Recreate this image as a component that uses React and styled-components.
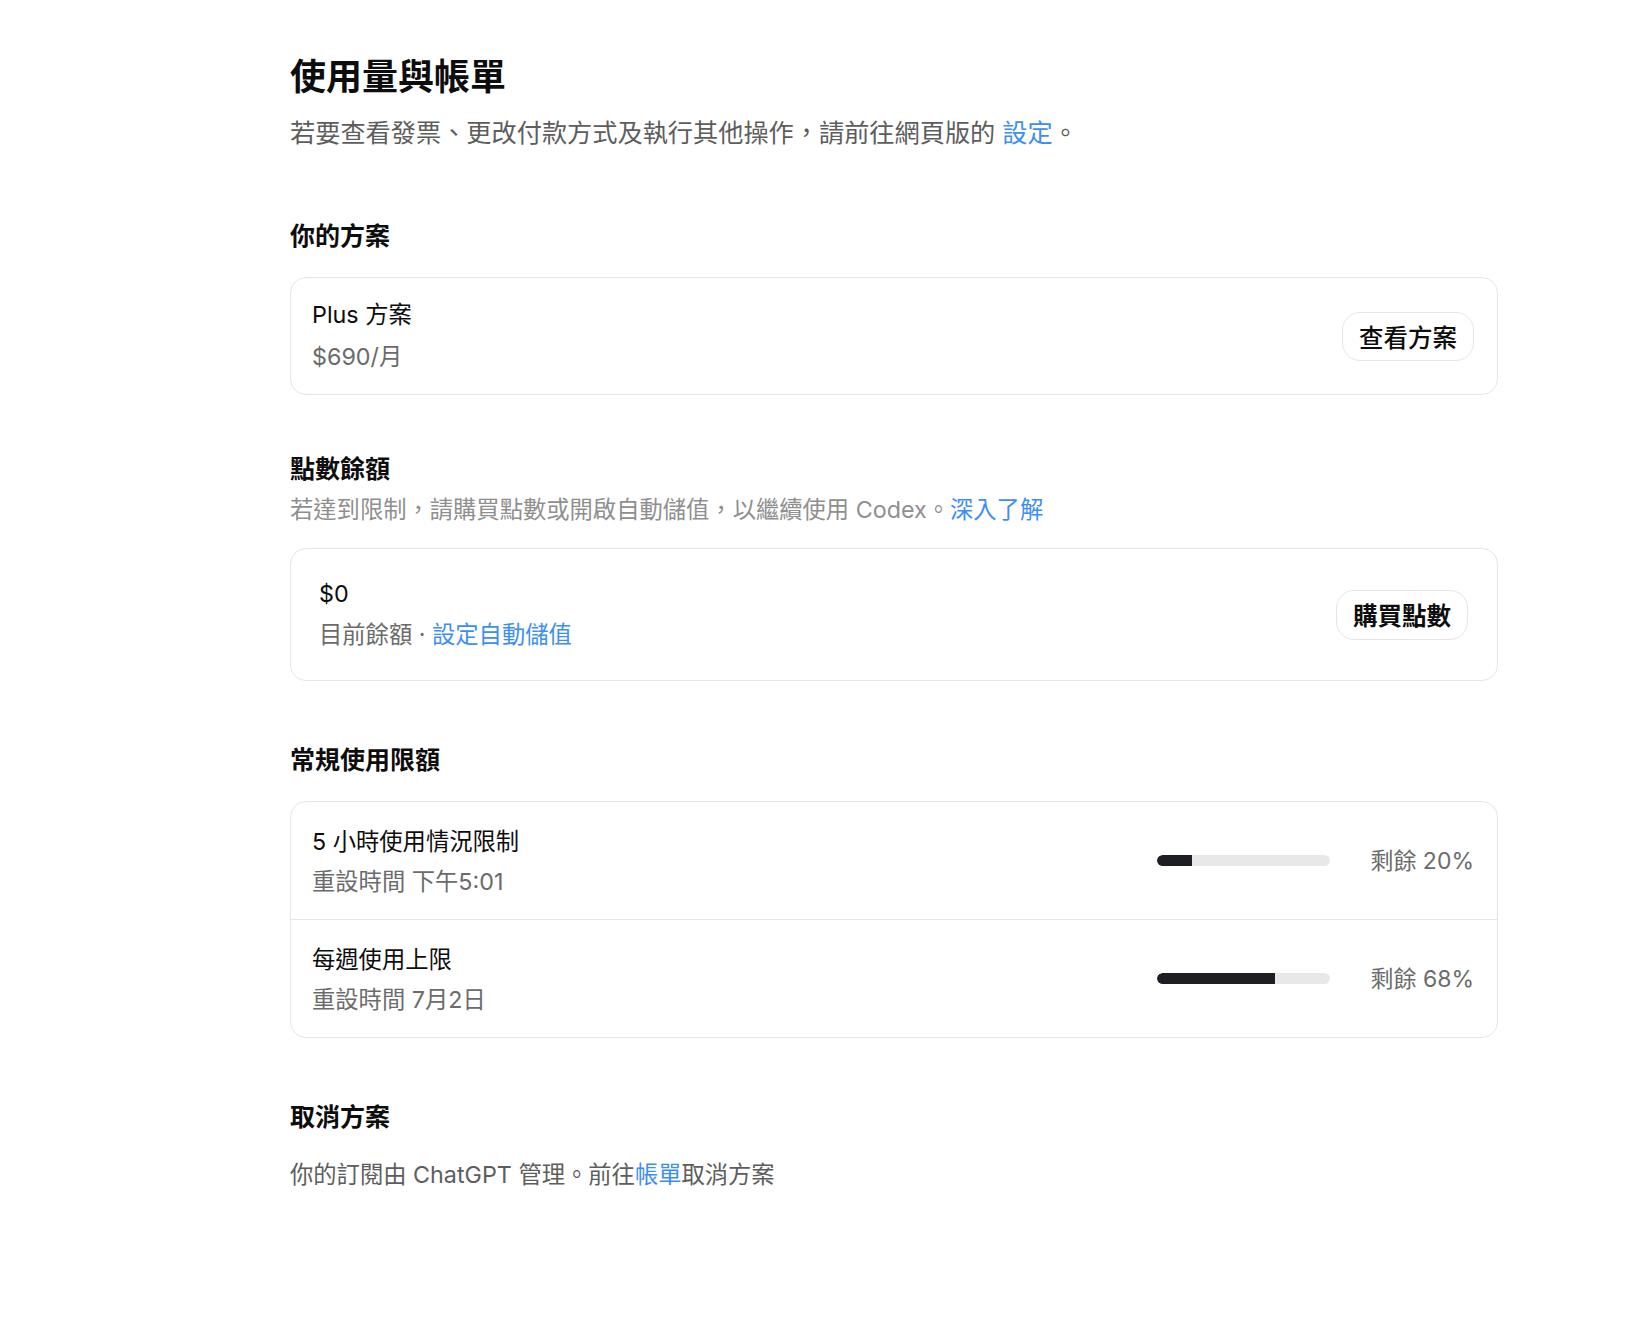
import React from 'react';
import styled, { createGlobalStyle } from 'styled-components';

const GlobalStyle = createGlobalStyle`
    body {
        margin: 0;
        background: #ffffff;
        font-family: 'Inter', 'Noto Sans CJK TC', sans-serif;
        color: #0d0d0d;
    }
`

const limits = [
    { title: '5 小時使用情況限制', reset: '重設時間 下午5:01', remaining: 20 },
    { title: '每週使用上限', reset: '重設時間 7月2日', remaining: 68 },
];

function App() {
    return (
    <>
        <GlobalStyle />
        <Page>
            <Title>使用量與帳單</Title>
            <Lead>若要查看發票、更改付款方式及執行其他操作，請前往網頁版的 <Link>設定</Link>。</Lead>

            <SectionTitle $top={69}>你的方案</SectionTitle>
            <Card $pad="21px 23px 21px 21px">
                <Info $gap={10}>
                    <Primary>Plus 方案</Primary>
                    <Secondary>$690/月</Secondary>
                </Info>
                <PillButton>查看方案</PillButton>
            </Card>

            <SectionTitle $top={57}>點數餘額</SectionTitle>
            <Hint>若達到限制，請購買點數或開啟自動儲值，以繼續使用 Codex。<Link>深入了解</Link></Hint>
            <Card $pad="29px 29px 29px 28px">
                <Info $gap={9}>
                    <Primary>$0</Primary>
                    <Secondary>目前餘額 · <Link>設定自動儲值</Link></Secondary>
                </Info>
                <PillButton $bold>購買點數</PillButton>
            </Card>

            <SectionTitle $top={62}>常規使用限額</SectionTitle>
            <Card $column>
                {limits.map((item) => (
                    <LimitRow key={item.title}>
                        <Info $gap={8}>
                            <Primary>{item.title}</Primary>
                            <Secondary>{item.reset}</Secondary>
                        </Info>
                        <Meter>
                            <Track>
                                <Fill style={{ width: `${item.remaining}%` }} />
                            </Track>
                            <Remaining>剩餘 {item.remaining}%</Remaining>
                        </Meter>
                    </LimitRow>
                ))}
            </Card>

            <SectionTitle $top={62}>取消方案</SectionTitle>
            <Footnote>你的訂閱由 ChatGPT 管理。前往<Link>帳單</Link>取消方案</Footnote>
        </Page>
    </>
    )
}

const Page = styled.div`
    width: 1208px;
    margin-left: 290px;
    padding-top: 55px;
    padding-bottom: 120px;
    display: flex;
    flex-direction: column;
`

const Title = styled.h1`
    margin: 0;
    font-size: 36px;
    line-height: 44px;
    font-weight: 700;
    color: #0d0d0d;
`

const Lead = styled.p`
    margin: 17px 0 0;
    font-size: 25.2px;
    line-height: 34px;
    color: #5d5d5d;
`

const Link = styled.span`
    color: #3d8ef3;
`

const SectionTitle = styled.h2`
    margin: ${(p) => p.$top}px 0 24px;
    font-size: 25px;
    line-height: 34px;
    font-weight: 600;
    color: #0d0d0d;
`

const Hint = styled.p`
    margin: -17px 0 21px;
    font-size: 23.3px;
    line-height: 34px;
    color: #8f8f8f;
`

const Footnote = styled.p`
    margin: 0;
    font-size: 23.3px;
    line-height: 34px;
    color: #5d5d5d;
`

const Card = styled.div`
    border: 1px solid #e6e6e6;
    border-radius: 16px;
    display: flex;
    flex-direction: ${(p) => (p.$column ? 'column' : 'row')};
    align-items: ${(p) => (p.$column ? 'stretch' : 'center')};
    justify-content: space-between;
    padding: ${(p) => p.$pad || '0'};
    font-size: 23.3px;
`

const Info = styled.div`
    display: flex;
    flex-direction: column;
    gap: ${(p) => p.$gap}px;
    line-height: 32px;
`

const Primary = styled.div`
    color: #0d0d0d;
`

const Secondary = styled.div`
    color: #6b6b6b;
`

const PillButton = styled.button`
    font-family: inherit;
    font-size: 24.5px;
    font-weight: ${(p) => (p.$bold ? 700 : 500)};
    color: #0d0d0d;
    background: #ffffff;
    border: 1px solid #e6e6e6;
    border-radius: 18px;
    height: ${(p) => (p.$bold ? 50 : 49)}px;
    padding: 0 16px;
    display: flex;
    align-items: center;
`

const LimitRow = styled.div`
    display: flex;
    align-items: center;
    justify-content: space-between;
    padding: 24px 23px 21px 21px;

    & + & {
        border-top: 1px solid #e6e6e6;
    }
`

const Meter = styled.div`
    display: flex;
    align-items: center;
    gap: 40px;
    margin-top: -3px;
`

const Track = styled.div`
    width: 173px;
    height: 11px;
    border-radius: 6px;
    background: #e8e8e8;
    overflow: hidden;
`

const Fill = styled.div`
    height: 100%;
    background: #1d1f24;
    border-radius: 6px 0 0 6px;
`

const Remaining = styled.div`
    font-size: 23px;
    color: #6b6b6b;
    line-height: 32px;
`

export default App
